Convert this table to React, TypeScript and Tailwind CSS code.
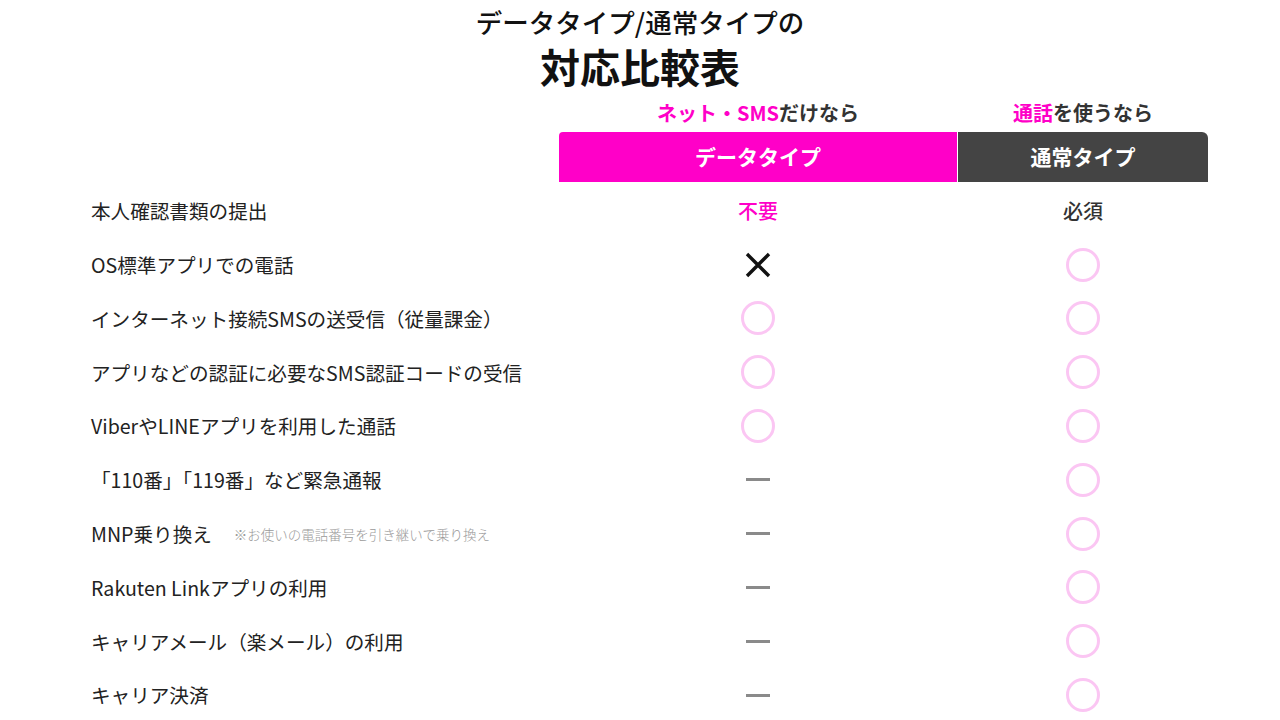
import React from "react";

type Cell = "circle" | "x" | "dash" | "fuyou" | "hissu";

const rows: { label: string; note?: string; a: Cell; b: Cell }[] = [
  { label: "本人確認書類の提出", a: "fuyou", b: "hissu" },
  { label: "OS標準アプリでの電話", a: "x", b: "circle" },
  { label: "インターネット接続SMSの送受信（従量課金）", a: "circle", b: "circle" },
  { label: "アプリなどの認証に必要なSMS認証コードの受信", a: "circle", b: "circle" },
  { label: "ViberやLINEアプリを利用した通話", a: "circle", b: "circle" },
  { label: "「110番」「119番」など緊急通報", a: "dash", b: "circle" },
  { label: "MNP乗り換え", note: "※お使いの電話番号を引き継いで乗り換え", a: "dash", b: "circle" },
  { label: "Rakuten Linkアプリの利用", a: "dash", b: "circle" },
  { label: "キャリアメール（楽メール）の利用", a: "dash", b: "circle" },
  { label: "キャリア決済", a: "dash", b: "circle" },
];

function Mark({ c }: { c: Cell }) {
  if (c === "circle")
    return <div className="w-[34px] h-[34px] rounded-full border-[3px] border-[#fbc6f3]" />;
  if (c === "x")
    return (
      <svg width="26" height="26" viewBox="0 0 26 26">
        <path d="M2 2 L24 24 M24 2 L2 24" stroke="#111" strokeWidth="3.4" />
      </svg>
    );
  if (c === "dash") return <div className="w-[24px] h-[3px] bg-[#8a8a8a]" />;
  if (c === "fuyou") return <span className="text-[20px] font-medium text-[#ff00c8]">不要</span>;
  return <span className="text-[20px] font-medium text-[#333]">必須</span>;
}

export default function App() {
  return (
    <div
      className="w-[1280px] h-[720px] bg-white overflow-hidden text-[#222]"
      style={{ fontFamily: '"Noto Sans CJK JP", "Noto Sans", sans-serif' }}
    >
      <div className="flex flex-col items-center pt-[7px]">
        <div className="text-[26.5px] leading-[30px] font-medium text-[#111]">データタイプ/通常タイプの</div>
        <div className="mt-[7px] text-[40px] leading-[44px] font-bold text-[#111]">対応比較表</div>
      </div>
      <div className="pl-[91px] mt-[13px] grid grid-cols-[468px_398px_251px]">
        <div />
        <div className="h-[24px] flex items-center justify-center text-[20px] font-bold text-[#333] leading-[24px]">
          <span className="text-[#ff00c8]">ネット・SMS</span>だけなら
        </div>
        <div className="h-[24px] flex items-center justify-center text-[20px] font-bold text-[#333] leading-[24px] pl-px">
          <span className="text-[#ff00c8]">通話</span>を使うなら
        </div>
        <div className="col-span-3 h-[7px]" />
        <div />
        <div className="h-[50px] bg-[#ff00c8] rounded-tl-[4px] flex items-center justify-center text-white text-[21px] font-bold">
          データタイプ
        </div>
        <div className="h-[50px] ml-px bg-[#444] rounded-tr-[6px] flex items-center justify-center text-white text-[21px] font-bold">
          通常タイプ
        </div>
        <div className="col-span-3 h-[2px]" />
        {rows.map((r, i) => (
          <React.Fragment key={i}>
            <div className="h-[53.8px] flex items-center text-[19.6px]">
              <span>{r.label}</span>
              {r.note && <span className="ml-[22px] text-[13.5px] font-light text-[#999]">{r.note}</span>}
            </div>
            <div className="h-[53.8px] flex items-center justify-center">
              <Mark c={r.a} />
            </div>
            <div className="h-[53.8px] flex items-center justify-center pl-px">
              <Mark c={r.b} />
            </div>
          </React.Fragment>
        ))}
      </div>
    </div>
  );
}
